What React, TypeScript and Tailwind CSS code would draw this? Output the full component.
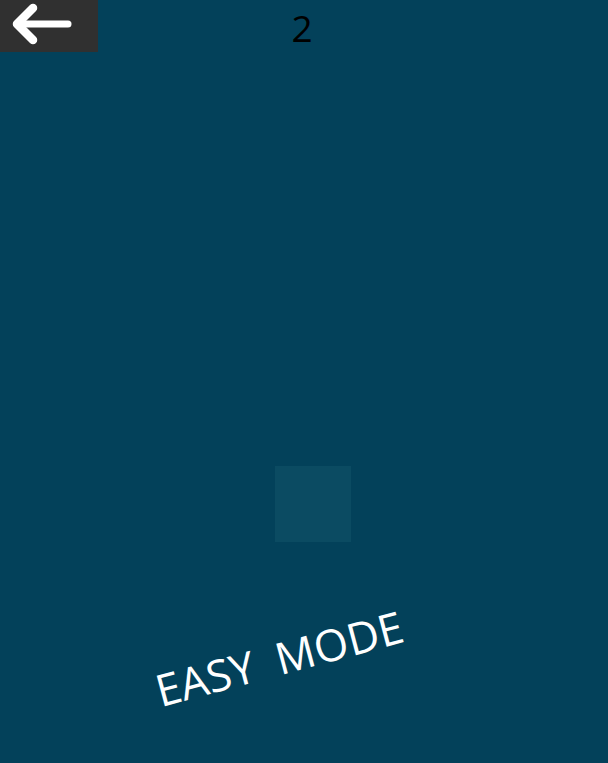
export default function App() {
  return (
    <div className="w-[608px] h-[763px] bg-[#03415a] overflow-hidden flex flex-col font-['Open_Sans',sans-serif]">
      <div className="grid grid-cols-[98px_1fr_98px] h-[52px]">
        <button className="w-[98px] h-[52px] bg-[#303030] flex items-start pl-[12px] pt-[3px]">
          <svg width="62" height="42" viewBox="0 0 62 42" fill="none">
            <path d="M21 5L5 21L21 37" stroke="white" strokeWidth="8.5" strokeLinecap="round" strokeLinejoin="round" />
            <path d="M8 21H56" stroke="white" strokeWidth="7" strokeLinecap="round" />
          </svg>
        </button>
        <div className="flex justify-center pt-[2px] pr-[4px]">
          <span className="text-[37px] leading-[52px] text-black">2</span>
        </div>
        <div />
      </div>

      <div className="mt-[414px] ml-[275px] w-[76px] h-[76px] bg-[#0b4b62]" />

      <div className="mt-[90px] ml-[129px] w-[300px] flex justify-center">
        <span className="whitespace-pre text-[44px] leading-[52px] text-white -rotate-[15deg] origin-center">
          EASY  MODE
        </span>
      </div>
    </div>
  );
}
